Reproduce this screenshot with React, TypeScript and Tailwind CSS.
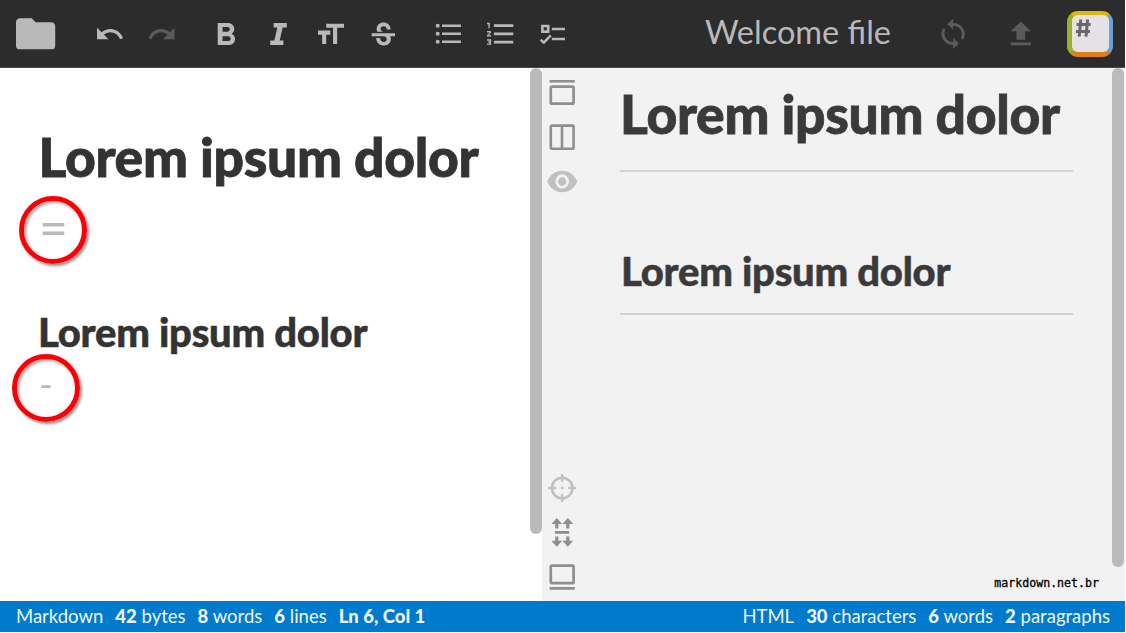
import type { ReactNode } from "react";

type Box = [number, number, number, number];

/** A drawing area whose user units are pixels; `x`/`y` give its origin. */
function Slot({ x, y = 0, w = 52, h = 68, className = "", children }: { x: number; y?: number; w?: number; h?: number; className?: string; children: ReactNode }) {
  return (
    <svg width={w} height={h} viewBox={`${x} ${y} ${w} ${h}`} fill="currentColor" className={`shrink-0 ${className}`}>
      {children}
    </svg>
  );
}

/** Fits the `from` rectangle of a path into the `to` rectangle. */
function Glyph({ d, from, to }: { d: string; from: Box; to: Box }) {
  return (
    <svg x={to[0]} y={to[1]} width={to[2]} height={to[3]} viewBox={from.join(" ")} preserveAspectRatio="none" overflow="visible">
      <path d={d} />
    </svg>
  );
}

const paths = {
  folder: "M10,4H4C2.89,4 2,4.89 2,6V18A2,2 0 0,0 4,20H20A2,2 0 0,0 22,18V8C22,6.89 21.1,6 20,6H12L10,4Z",
  undo: "M12.5,8C9.85,8 7.45,9 5.6,10.6L2,7V16H11L7.38,12.38C8.77,11.22 10.54,10.5 12.5,10.5C16.04,10.5 19.08,12.81 20.13,16L22.5,15.22C21.11,11.03 17.15,8 12.5,8Z",
  redo: "M18.4,10.6C16.55,9 14.15,8 11.5,8C6.85,8 2.89,11.03 1.5,15.22L3.87,16C4.92,12.81 7.96,10.5 11.5,10.5C13.46,10.5 15.23,11.22 16.62,12.38L13,16H22V7L18.4,10.6Z",
  bold: "M13.5,15.5H10V12.5H13.5A1.5,1.5 0 0,1 15,14A1.5,1.5 0 0,1 13.5,15.5M10,6.5H13A1.5,1.5 0 0,1 14.5,8A1.5,1.5 0 0,1 13,9.5H10M15.6,10.79C16.57,10.11 17.25,9 17.25,8C17.25,5.74 15.5,4 13.25,4H7V18H14.04C16.14,18 17.75,16.3 17.75,14.21C17.75,12.69 16.89,11.39 15.6,10.79Z",
  size: "M3,12H6V19H9V12H12V9H3M9,4V7H14V19H17V7H22V4H9Z",
  strike: "M7.2 9.8C6 7.5 7.7 4.8 10.1 4.3C13.2 3.3 17.7 4.7 17.6 8.5H14.6C14.6 8.2 14.5 7.9 14.5 7.7C14.3 7.1 13.9 6.8 13.3 6.6C12.5 6.3 11.2 6.4 10.5 6.9C9 8.2 10.4 9.5 12 10H7.4C7.3 9.9 7.3 9.8 7.2 9.8M21 13V11H3V13H12.6C12.8 13.1 13 13.1 13.2 13.2C13.8 13.5 14.3 13.7 14.5 14.3C14.6 14.7 14.7 15.2 14.5 15.6C14.3 16.1 13.9 16.3 13.4 16.5C11.6 17 9.4 16.3 9.5 14.1H6.5C6.4 16.7 8.6 18.5 11 18.8C14.8 19.6 19.3 17.2 17.3 12.9L21 13Z",
  numbers: "M7,13V11H21V13H7M7,19V17H21V19H7M7,7V5H21V7H7M3,8V5H2V4H4V8H3M2,17V16H5V20H2V19H4V18.5H3V17.5H4V17H2M4.25,10A0.75,0.75 0 0,1 5,10.75C5,10.95 4.92,11.14 4.79,11.27L3.12,13H5V14H2V13.08L4,11H2V10H4.25Z",
  sync: "M12,18A6,6 0 0,1 6,12C6,11 6.25,10.03 6.7,9.2L5.24,7.74C4.46,8.97 4,10.43 4,12A8,8 0 0,0 12,20V23L16,19L12,15M12,4V1L8,5L12,9V6A6,6 0 0,1 18,12C18,13 17.75,13.97 17.3,14.8L18.76,16.26C19.54,15.03 20,13.57 20,12A8,8 0 0,0 12,4Z",
  upload: "M9,16V10H5L12,3L19,10H15V16H9M5,20V18H19V20H5Z",
  eye: "M12,9A3,3 0 0,0 9,12A3,3 0 0,0 12,15A3,3 0 0,0 15,12A3,3 0 0,0 12,9M12,17A5,5 0 0,1 7,12A5,5 0 0,1 12,7A5,5 0 0,1 17,12A5,5 0 0,1 12,17M12,4.5C7,4.5 2.73,7.61 1,12C2.73,16.39 7,19.5 12,19.5C17,19.5 21.27,16.39 23,12C21.27,7.61 17,4.5 12,4.5Z",
};

function Toolbar() {
  return (
    <header className="flex h-[68px] shrink-0 border-b border-[#4a4a4a] bg-[#2c2c2c] text-[#b9b9b9]">
      <Slot x={0} w={83}>
        <Glyph d={paths.folder} from={[2, 4, 20, 16]} to={[16, 18.3, 39.2, 31]} />
      </Slot>
      <Slot x={83}>
        <Glyph d={paths.undo} from={[2, 7, 20.5, 9]} to={[97, 27.7, 26, 11.5]} />
      </Slot>
      <Slot x={135} w={65} className="text-[#5b5b5b]">
        <Glyph d={paths.redo} from={[1.5, 7, 20.5, 9]} to={[148.5, 27.7, 26, 11.5]} />
      </Slot>
      <Slot x={200}>
        <Glyph d={paths.bold} from={[7, 4, 10.75, 14]} to={[217.7, 23, 17.4, 22]} />
      </Slot>
      <Slot x={252}>
        <path d="M273.6 23H286.8V27.6H282.6L279.7 40.4H283.4V45H270.2V40.4H274.4L277.3 27.6H273.6Z" />
      </Slot>
      <Slot x={304} w={53}>
        <Glyph d={paths.size} from={[3, 4, 19, 15]} to={[318, 23.8, 26, 20.3]} />
      </Slot>
      <Slot x={357} w={65}>
        <Glyph d={paths.strike} from={[3, 4, 18, 15]} to={[371.7, 22.5, 23.3, 23]} />
      </Slot>
      <Slot x={422}>
        <path d="M442 24.5h19v2.5h-19zM442 32.5h19v2.5h-19zM442 40.6h19v2.5h-19z" />
        <circle cx="437.7" cy="25.7" r="2" />
        <circle cx="437.7" cy="33.7" r="2" />
        <circle cx="437.7" cy="41.8" r="2" />
      </Slot>
      <Slot x={474}>
        <Glyph d={paths.numbers} from={[2, 4, 19, 16]} to={[487, 22.8, 26.3, 22]} />
      </Slot>
      <Slot x={526}>
        <path d="M542.4 26h5.8v5.6h-5.8z" fill="none" stroke="currentColor" strokeWidth="2.6" />
        <path d="M540.6 39.6l3.2 3 7-7.2" fill="none" stroke="currentColor" strokeWidth="2.5" />
        <path d="M551.8 27.8h13.2v2.5h-13.2zM551.8 37.8h13.2v2.5h-13.2z" />
      </Slot>
      <div className="flex-1 pr-[31px] text-right text-[32.5px] leading-[64px] whitespace-nowrap text-[#b9b9b9]">Welcome file</div>
      <Slot x={922} w={68} className="text-[#5b5b5b]">
        <Glyph d={paths.sync} from={[4, 1, 16, 22]} to={[941.5, 18.8, 23.3, 30.2]} />
      </Slot>
      <Slot x={990} w={77} className="text-[#5b5b5b]">
        <Glyph d={paths.upload} from={[5, 3, 14, 17]} to={[1010.7, 21.5, 20.2, 23.8]} />
      </Slot>
      <div className="mt-[11px] mr-[12px] size-[46px] shrink-0 rounded-[11px] border-[5px] border-t-4 border-r-4 border-t-[#dcb814] border-r-[#6a9fdf] border-b-[#dd8019] border-l-[#9bb322] bg-[#dcb814]">
        <div className="size-full rounded-[6px] bg-[#e4e2e5]">
          <svg width="37" height="37" viewBox="1072 15 37 37" fill="none" stroke="#686868" strokeWidth="3">
            <path d="M1080.8 19.5L1079.2 36.6M1087.6 19.5L1086 36.6M1076.6 24.5H1090.6M1076 31.5H1090" />
          </svg>
        </div>
      </div>
    </header>
  );
}

function LayoutBar() {
  return (
    <div className="flex w-[40px] shrink-0 flex-col text-[#8f8f8f]">
      <Slot x={542} y={68} w={40} h={45}>
        <path d="M549.6 80h25.2v2.6h-25.2z" />
        <rect x="550.8" y="86.7" width="22.8" height="17" rx="1.2" fill="none" stroke="currentColor" strokeWidth="2.7" />
      </Slot>
      <Slot x={542} y={113} w={40} h={45}>
        <path d="M550.8 126.8q0-1.2 1.2-1.2h20.4q1.2 0 1.2 1.2v20.8q0 1.2-1.2 1.2h-20.4q-1.2 0-1.2-1.2zM562 125v24" fill="none" stroke="currentColor" strokeWidth="2.6" />
      </Slot>
      <Slot x={542} y={158} w={40} h={45} className="text-[#c0c0c0]">
        <Glyph d={paths.eye} from={[1, 4.5, 22, 15]} to={[547.2, 170.8, 30, 21.4]} />
      </Slot>
      <div className="flex-1" />
      <Slot x={542} y={466} w={40} h={45} className="text-[#c0c0c0]">
        <circle cx="562.2" cy="488" r="10.3" fill="none" stroke="currentColor" strokeWidth="2.5" />
        <path d="M562.2 474v7.8M562.2 494.2v7.8M548.3 488h7.8M568.3 488h7.8" stroke="currentColor" strokeWidth="2.5" />
        <circle cx="562.2" cy="488" r="1.4" />
      </Slot>
      <Slot x={542} y={511} w={40} h={45}>
        <path d="M556.8 518l5.4 6h-3.8v4.4h-3.2V524h-3.8zM567.8 518l5.4 6h-3.8v4.4h-3.2V524h-3.8zM555 531h14.2v2.8H555zM556.8 546.8l5.4-6h-3.8v-4.4h-3.2v4.4h-3.8zM567.8 546.8l5.4-6h-3.8v-4.4h-3.2v4.4h-3.8z" />
      </Slot>
      <Slot x={542} y={556} w={40} h={45}>
        <rect x="550.8" y="565.6" width="22.8" height="17.6" rx="1.2" fill="none" stroke="currentColor" strokeWidth="2.7" />
        <path d="M549.6 587h25.2v2.8h-25.2z" />
      </Slot>
    </div>
  );
}

function Marked({ className, children }: { className: string; children: ReactNode }) {
  return (
    <div className={`flex size-[68px] items-center rounded-full border-[5px] border-[#fb0007] text-[#b9b9b9] shadow-[2px_2px_3px_rgba(0,0,0,0.45),inset_2px_2px_3px_rgba(0,0,0,0.35)] ${className}`}>
      {children}
    </div>
  );
}

function Stat({ value, label }: { value: string; label?: string }) {
  return (
    <span>
      <b className="font-black">{value}</b>
      {label && ` ${label}`}
    </span>
  );
}

function Title() {
  return <h1 className="text-[53.4px] leading-[66px] font-black tracking-[-0.32px] whitespace-nowrap [-webkit-text-stroke:0.8px]">Lorem ipsum dolor</h1>;
}

function Subtitle() {
  return <h2 className="text-[40px] leading-[48px] font-black tracking-[-0.25px] whitespace-nowrap [-webkit-text-stroke:0.5px]">Lorem ipsum dolor</h2>;
}

export default function App() {
  return (
    <div className="h-[633px] w-[1126px] overflow-hidden bg-white font-['Lato',sans-serif]">
      <div className="flex h-[632px] w-[1125px] flex-col">
        <Toolbar />
        <main className="flex min-h-0 flex-1">
          <section className="flex w-[542px] shrink-0 justify-between bg-white text-[#333333]">
            <div className="flex flex-col items-start">
              <div className="mt-[55px] ml-[38.5px] h-[73px]">
                <Title />
              </div>
              <Marked className="ml-[19px]">
                <span className="pb-[7px] pl-[15px] text-[50px] leading-none">=</span>
              </Marked>
              <div className="mt-[44px] ml-[38px] h-[46px]">
                <Subtitle />
              </div>
              <Marked className="ml-[12px]">
                <span className="pb-[9px] pl-[22px] text-[37px] leading-none">-</span>
              </Marked>
            </div>
            <div className="h-[466px] w-[12px] rounded-full bg-[#bababa]" />
          </section>
          <section className="flex flex-1 bg-[#f3f2f3] text-[#3a3a3b]">
            <LayoutBar />
            <div className="flex flex-1 flex-col pl-[38px]">
              <div className="mt-[12px] h-[90px]">
                <Title />
              </div>
              <div className="h-[2px] w-[453px] bg-[#d2d2d2]" />
              <div className="mt-[75px] ml-px h-[66px]">
                <Subtitle />
              </div>
              <div className="h-[2px] w-[453px] bg-[#d2d2d2]" />
              <div className="mt-auto mr-[13px] pb-[9px] text-right font-['DejaVu_Sans_Mono',monospace] text-[11.6px] leading-[18px] text-black [-webkit-text-stroke:0.3px]">markdown.net.br</div>
            </div>
            <div className="mr-px h-[499px] w-[12px] shrink-0 rounded-full bg-[#bababa]" />
          </section>
        </main>
        <footer className="flex h-[31px] shrink-0 items-center justify-between bg-[#007acc] px-[15px] pl-[16px] text-[18.5px] whitespace-nowrap text-[#eef6fc]">
          <div className="flex gap-[12px]">
            <span>Markdown</span>
            <Stat value="42" label="bytes" />
            <Stat value="8" label="words" />
            <Stat value="6" label="lines" />
            <Stat value="Ln 6, Col 1" />
          </div>
          <div className="flex gap-[12px]">
            <span>HTML</span>
            <Stat value="30" label="characters" />
            <Stat value="6" label="words" />
            <Stat value="2" label="paragraphs" />
          </div>
        </footer>
      </div>
    </div>
  );
}
